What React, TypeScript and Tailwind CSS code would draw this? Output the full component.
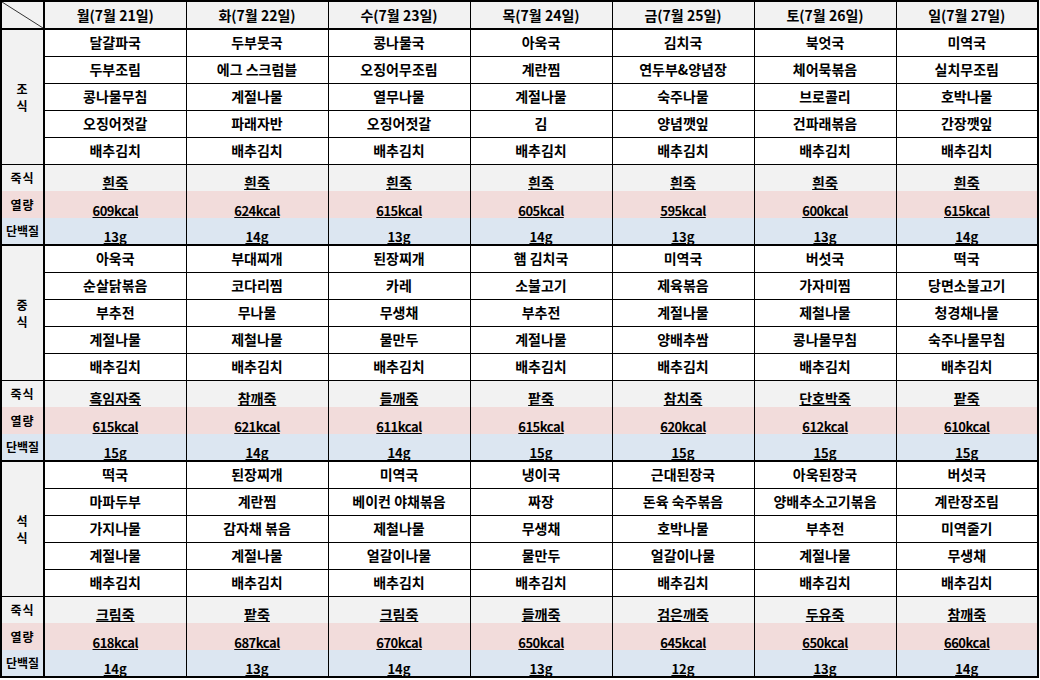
const days = [
  '월(7월 21일)',
  '화(7월 22일)',
  '수(7월 23일)',
  '목(7월 24일)',
  '금(7월 25일)',
  '토(7월 26일)',
  '일(7월 27일)',
];

type Meal = {
  label: string;
  items: string[][];
  porridge: string[];
  kcal: string[];
  protein: string[];
};

const kimchi = Array(7).fill('배추김치');

const meals: Meal[] = [
  {
    label: '조식',
    items: [
      ['달걀파국', '두부뭇국', '콩나물국', '아욱국', '김치국', '북엇국', '미역국'],
      ['두부조림', '에그 스크럼블', '오징어무조림', '계란찜', '연두부&양념장', '체어묵볶음', '실치무조림'],
      ['콩나물무침', '계절나물', '열무나물', '계절나물', '숙주나물', '브로콜리', '호박나물'],
      ['오징어젓갈', '파래자반', '오징어젓갈', '김', '양념깻잎', '건파래볶음', '간장깻잎'],
      kimchi,
    ],
    porridge: Array(7).fill('흰죽'),
    kcal: ['609kcal', '624kcal', '615kcal', '605kcal', '595kcal', '600kcal', '615kcal'],
    protein: ['13g', '14g', '13g', '14g', '13g', '13g', '14g'],
  },
  {
    label: '중식',
    items: [
      ['아욱국', '부대찌개', '된장찌개', '햄 김치국', '미역국', '버섯국', '떡국'],
      ['순살닭볶음', '코다리찜', '카레', '소불고기', '제육볶음', '가자미찜', '당면소불고기'],
      ['부추전', '무나물', '무생채', '부추전', '계절나물', '제철나물', '청경채나물'],
      ['계절나물', '제철나물', '물만두', '계절나물', '양배추쌈', '콩나물무침', '숙주나물무침'],
      kimchi,
    ],
    porridge: ['흑임자죽', '참깨죽', '들깨죽', '팥죽', '참치죽', '단호박죽', '팥죽'],
    kcal: ['615kcal', '621kcal', '611kcal', '615kcal', '620kcal', '612kcal', '610kcal'],
    protein: ['15g', '14g', '14g', '15g', '15g', '15g', '15g'],
  },
  {
    label: '석식',
    items: [
      ['떡국', '된장찌개', '미역국', '냉이국', '근대된장국', '아욱된장국', '버섯국'],
      ['마파두부', '계란찜', '베이컨 야채볶음', '짜장', '돈육 숙주볶음', '양배추소고기볶음', '계란장조림'],
      ['가지나물', '감자채 볶음', '제철나물', '무생채', '호박나물', '부추전', '미역줄기'],
      ['계절나물', '계절나물', '얼갈이나물', '물만두', '얼갈이나물', '계절나물', '무생채'],
      kimchi,
    ],
    porridge: ['크림죽', '팥죽', '크림죽', '들깨죽', '검은깨죽', '두유죽', '참깨죽'],
    kcal: ['618kcal', '687kcal', '670kcal', '650kcal', '645kcal', '650kcal', '660kcal'],
    protein: ['14g', '13g', '14g', '13g', '12g', '13g', '14g'],
  },
];

const cell = 'h-[27px] p-0 text-center border-x border-black whitespace-nowrap';
const label = 'p-0 text-center border-l-2 border-r-2 border-black text-[12px] tracking-[1px]';
const under = 'underline decoration-1 underline-offset-[1px]';

function MealBlock({ meal }: { meal: Meal }) {
  return (
    <>
      {meal.items.map((row, r) => (
        <tr key={r}>
          {r === 0 && (
            <td rowSpan={5} className={`${label} bg-[#f2f2f2] border-t-2 border-b`}>
              <div className="flex flex-col items-center gap-[4px] leading-[13px]">
                <span>{meal.label[0]}</span>
                <span>{meal.label[1]}</span>
              </div>
            </td>
          )}
          {row.map((item, i) => (
            <td
              key={i}
              className={`${cell} bg-white align-middle border-b ${r === 0 ? 'border-t-2' : 'border-t'}`}
            >
              {item}
            </td>
          ))}
        </tr>
      ))}
      <tr>
        <td className={`${label} h-[27px] bg-[#f2f2f2] border-t align-middle`}>죽식</td>
        {meal.porridge.map((p, i) => (
          <td key={i} className={`${cell} bg-[#f2f2f2] border-t align-bottom leading-[15px] pb-[1px]`}>
            <span className={under}>{p}</span>
          </td>
        ))}
      </tr>
      <tr>
        <td className={`${label} h-[27px] bg-[#f2dcdb] align-middle`}>열량</td>
        {meal.kcal.map((k, i) => (
          <td key={i} className={`${cell} bg-[#f2dcdb] align-bottom leading-[15px] text-[13px] tracking-[-0.5px]`}>
            <span className={under}>{k}</span>
          </td>
        ))}
      </tr>
      <tr>
        <td className={`${label} h-[27px] bg-[#dce6f1] align-middle tracking-normal border-b-2`}>단백질</td>
        {meal.protein.map((g, i) => (
          <td key={i} className={`${cell} bg-[#dce6f1] align-bottom leading-[15px] text-[13px] border-b-2`}>
            <span className={under}>{g}</span>
          </td>
        ))}
      </tr>
    </>
  );
}

export default function App() {
  return (
    <div className="w-[1040px] h-[680px] overflow-hidden bg-white font-['Noto_Sans_CJK_KR','Noto_Sans',sans-serif] font-bold text-[14px] text-black">
      <table className="table-fixed border-collapse border-2 border-black">
        <colgroup>
          <col className="w-[43px]" />
          {days.map((d) => (
            <col key={d} className="w-[142px]" />
          ))}
        </colgroup>
        <thead>
          <tr>
            <th className="h-[28px] p-0 border-2 border-black bg-[#f2f2f2]">
              <svg className="block w-full h-[26px]" viewBox="0 0 41 26" preserveAspectRatio="none">
                <line x1="0" y1="0" x2="41" y2="26" stroke="#333" strokeWidth="1" />
              </svg>
            </th>
            {days.map((d) => (
              <th key={d} className="h-[28px] p-0 text-center font-bold border-x border-t-2 border-b-2 border-black bg-[#f2f2f2]">
                {d}
              </th>
            ))}
          </tr>
        </thead>
        <tbody>
          {meals.map((m) => (
            <MealBlock key={m.label} meal={m} />
          ))}
        </tbody>
      </table>
    </div>
  );
}
